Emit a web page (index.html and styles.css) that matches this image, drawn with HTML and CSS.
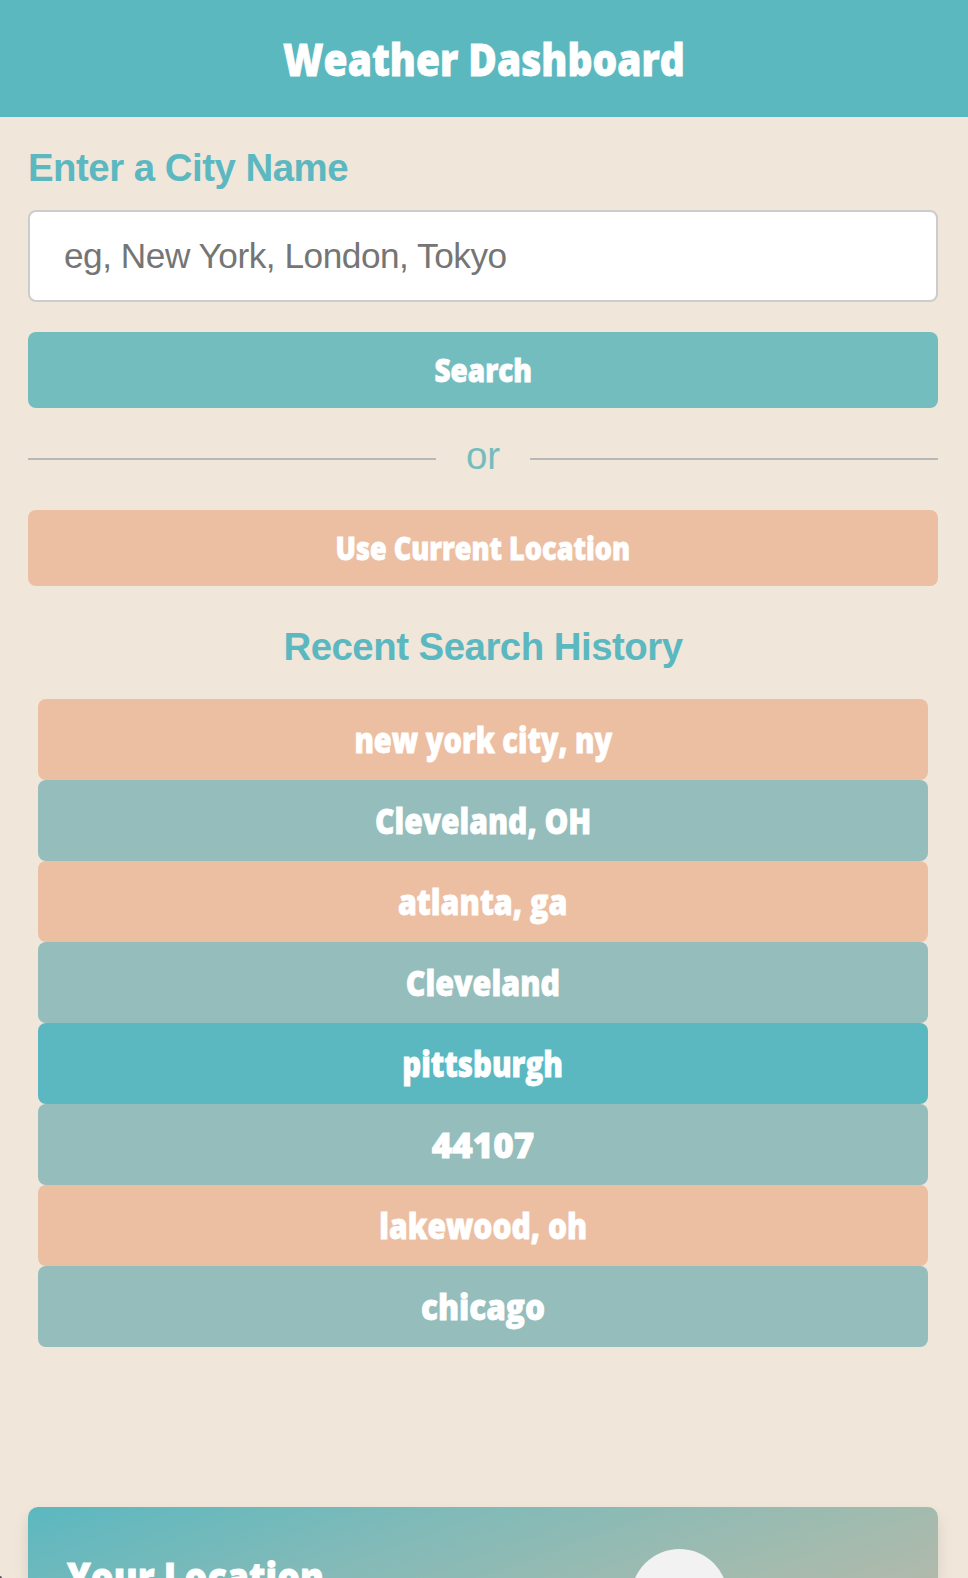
FILE: index.html
```html
<!DOCTYPE html>
<html lang="en">
<head>
<meta charset="utf-8">
<title>Weather Dashboard</title>
<link rel="stylesheet" href="styles.css">
</head>
<body>
<header class="header"><h1 class="header-title">Weather Dashboard</h1></header>
<main class="container">
  <section class="search">
    <label class="search-label" for="city">Enter a City Name</label>
    <input class="city-input" id="city" type="text" placeholder="eg, New York, London, Tokyo">
    <button class="btn btn-search"><span class="btn-text">Search</span></button>
    <div class="separator"><span class="or">or</span></div>
    <button class="btn btn-location"><span class="btn-text narrow">Use Current Location</span></button>
  </section>
  <section class="history">
    <h2 class="history-title">Recent Search History</h2>
    <ul class="history-list">
      <li class="city peach"><span class="name narrowest">new york city, ny</span></li>
      <li class="city sage"><span class="name">Cleveland, OH</span></li>
      <li class="city peach"><span class="name narrow">atlanta, ga</span></li>
      <li class="city sage"><span class="name narrow">Cleveland</span></li>
      <li class="city teal"><span class="name narrower">pittsburgh</span></li>
      <li class="city sage"><span class="name full">44107</span></li>
      <li class="city peach"><span class="name">lakewood, oh</span></li>
      <li class="city sage"><span class="name wide">chicago</span></li>
    </ul>
  </section>
  <section class="current">
    <h2 class="current-title">Your Location</h2>
    <div class="weather-icon"></div>
  </section>
</main>
<div class="corner"></div>
</body>
</html>
```
FILE: styles.css
```css
* { box-sizing: border-box; }
html { height: 1578px; overflow: hidden; }
body {
  position: relative;
  display: flex;
  flex-direction: column;
  margin: 0;
  height: 1578px;
  overflow: hidden;
  background: #f0e6da;
  font-family: "Liberation Sans", Arial, sans-serif;
}
.header {
  flex: none;
  height: 117px;
  display: flex;
  align-items: center;
  justify-content: center;
  background: #5cb8bf;
}
.header-title, .btn, .city, .current-title {
  font-family: "Open Sans", sans-serif;
  font-weight: 800;
  color: #fff;
  white-space: nowrap;
  -webkit-text-stroke: .8px #fff;
}
.header-title { margin: 0; font-size: 44px; line-height: 60px; transform: scaleX(.885); }
.container { flex: 1; min-height: 0; display: flex; flex-direction: column; padding: 0 30px 0 28px; }
.search, .history { flex: none; }
.search { display: flex; flex-direction: column; padding-top: 29px; }
.search-label { height: 44px; font-size: 38.4px; font-weight: 700; line-height: 44px; letter-spacing: -.5px; color: #5bb8c0; }
.city-input {
  height: 92px;
  margin: 20px 0 30px;
  padding: 0 34px;
  border: 2px solid #ccc;
  border-radius: 8px;
  background: #fff;
  font: 35.2px "Liberation Sans", Arial, sans-serif;
  letter-spacing: -.46px;
}
.city-input::placeholder { color: #757575; opacity: 1; }
.btn { height: 76px; padding: 0; border: 0; border-radius: 8px; font-size: 31px; }
.btn-text { display: inline-block; transform: scaleX(.9); }
.btn-text.narrow { transform: scaleX(.873); }
.btn-search { background: #74bdbf; }
.btn-location { background: #ecbfa3; }
.separator { display: flex; align-items: center; height: 102px; }
.separator::before, .separator::after { content: ""; flex: 1; height: 2px; background: #b8b8b8; }
.or { margin: -6px 30px 0; font-size: 38.4px; line-height: 44px; color: #74bdbf; }
.history { padding: 39px 10px 0; }
.history-title { margin: 0; font-size: 38.4px; line-height: 44px; letter-spacing: -.5px; text-align: center; color: #5bb8c0; }
.history-list { list-style: none; margin: 30px 0 0; padding: 0; }
.city { display: flex; align-items: center; justify-content: center; height: 81px; border-radius: 8px; font-size: 35px; }
.name { transform: scaleX(.857); }
.name.narrowest { transform: scaleX(.83); }
.name.narrower { transform: scaleX(.84); }
.name.narrow { transform: scaleX(.868); }
.name.wide { transform: scaleX(.9); }
.name.full { transform: none; }
.peach { background: #ecbfa3; }
.sage { background: #94bdbc; }
.teal { background: #5bb8c0; }
.current {
  flex: 1;
  display: grid;
  grid-template-columns: 564px 97px;
  grid-template-rows: 29px;
  margin-top: 160px;
  padding: 42px 39px 0;
  border-radius: 10px 10px 0 0;
  background: linear-gradient(160deg, #5bb8c0 0, #82bab8 156px, #a3bbae 311px, #b0b9ab 378px);
  box-shadow: 0 8px 16px rgba(0, 0, 0, .1);
}
.current-title { justify-self: start; margin: -3px 0 0; font-size: 41px; line-height: 60px; transform: scaleX(.874); transform-origin: 0 50%; }
.weather-icon { width: 97px; height: 97px; border-radius: 50%; background: #f2f2f2; }
/* dark mark at the page's lower left edge */
.corner { position: absolute; left: 0; bottom: 0; width: 2px; height: 2px; border-radius: 0 2px 0 0; background: #555; }
```
